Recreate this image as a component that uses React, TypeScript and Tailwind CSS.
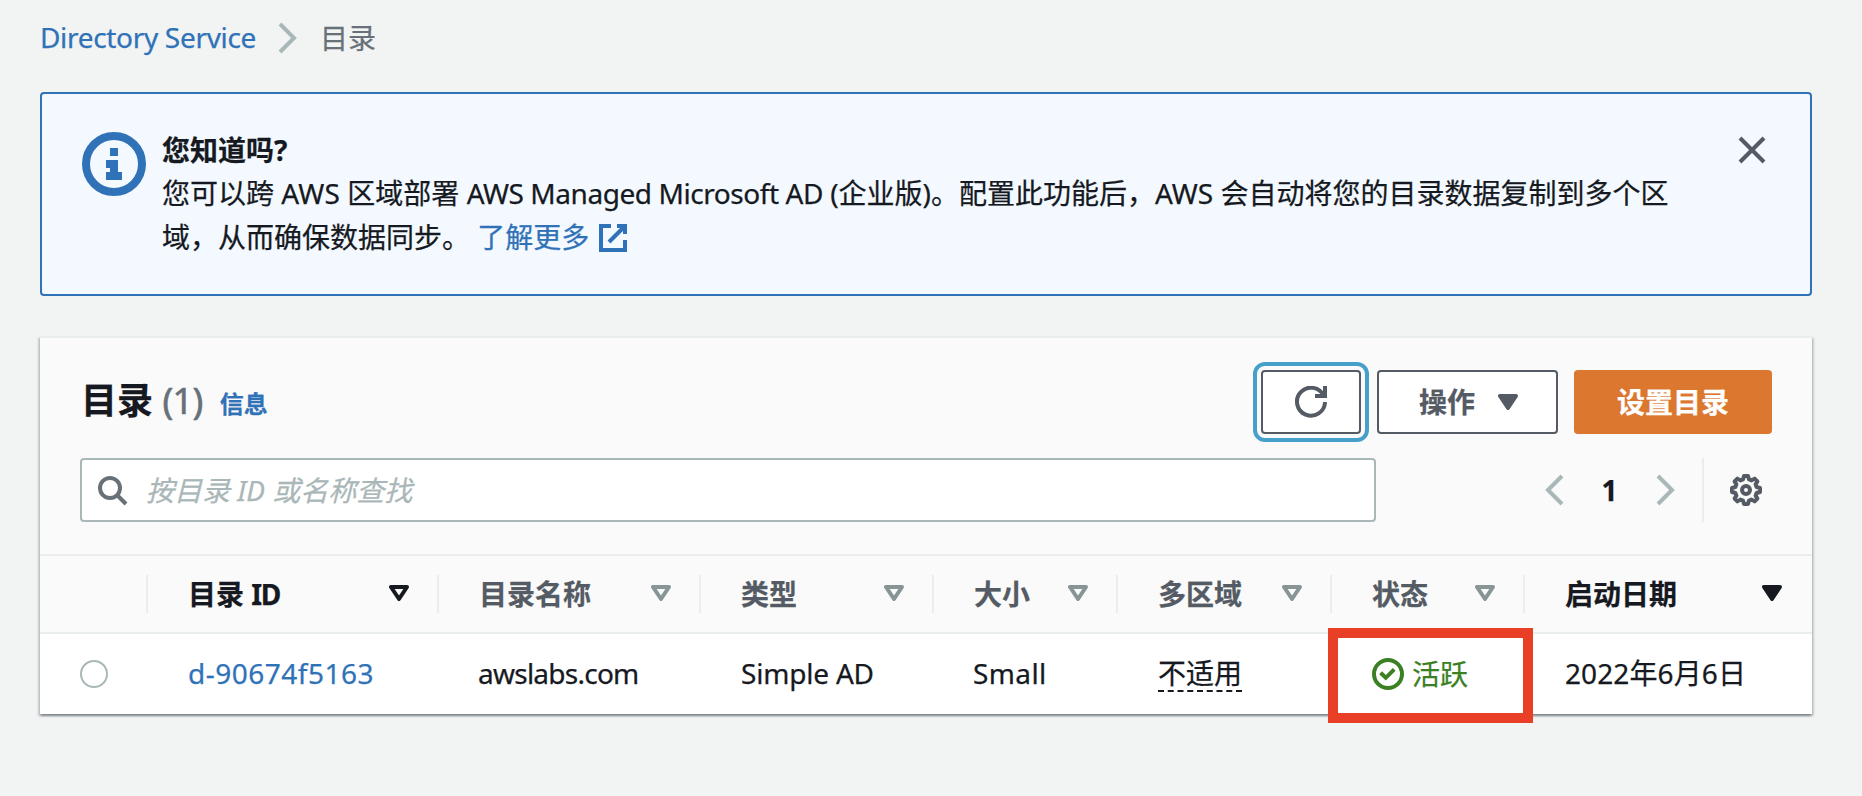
import type { ReactNode } from "react";

function Icon({ children, className = "" }: { children: ReactNode; className?: string }) {
  return (
    <svg viewBox="0 0 16 16" className={`block size-8 shrink-0 ${className}`} fill="none" stroke="currentColor" strokeWidth="2">
      {children}
    </svg>
  );
}

function ChevronRight({ className = "" }: { className?: string }) {
  return (
    <Icon className={className}>
      <path d="M4 1l7 7-7 7" />
    </Icon>
  );
}

function Caret({ filled = false, className = "" }: { filled?: boolean; className?: string }) {
  return (
    <svg viewBox="0 0 20 16" className={`block h-4 w-5 shrink-0 ${className}`} stroke="currentColor" strokeWidth="4" strokeLinejoin="round" fill={filled ? "currentColor" : "none"}>
      <path d="M2 2h16l-8 12z" />
    </svg>
  );
}

type Column = { label: ReactNode; state: "active" | "idle" | "sorted"; last?: boolean };

const columns: Column[] = [
  { label: <>目录 <span className="tracking-[-1.5px]">ID</span></>, state: "active" },
  { label: "目录名称", state: "idle" },
  { label: "类型", state: "idle" },
  { label: "大小", state: "idle" },
  { label: "多区域", state: "idle" },
  { label: "状态", state: "idle" },
  { label: "启动日期", state: "sorted", last: true },
];

const gridCols = "grid grid-cols-[108px_291px_262px_233px_184px_214px_193px_287px]";

export default function App() {
  return (
    <main
      lang="zh-CN"
      className="min-h-[796px] bg-[#f2f3f3] pt-4 pr-[50px] pl-10 font-['Noto_Sans','Noto_Sans_CJK_SC',sans-serif] text-[28px] leading-[44px] text-[#16191f] [-webkit-text-stroke:0.25px]"
    >
      <nav className="flex h-11 items-center">
        <a className="w-[232px] pb-0.5 tracking-[-0.32px] text-[#3072b8]">Directory Service</a>
        <ChevronRight className="text-[#aab7b8]" />
        <span className="ml-4 pb-px text-[#687078]">目录</span>
      </nav>

      <section className="mt-8 flex h-[204px] rounded-[4px] border-2 border-[#3072b8] bg-[#f3f9fe] pt-[34px] pl-10">
        <svg viewBox="0 0 16 16" className="mt-1 block size-16 shrink-0 text-[#3072b8]" fill="none" stroke="currentColor" strokeWidth="2">
          <circle cx="8" cy="8" r="7" />
          <path d="M7 5h2M6 8h3M8 8v3M6 11h4" />
        </svg>
        <div className="ml-4 w-[1574px] shrink-0">
          <div className="font-bold">您知道吗?</div>
          <p className="-mt-px whitespace-nowrap">
            您可以跨 <span className="tracking-[0.2px]">AWS</span> 区域部署 <span className="tracking-[-0.44px]">AWS Managed Microsoft AD</span> (企业版)。配置此功能后，AWS 会自动将您的目录数据复制到多个区
            <br />
            域，从而确保数据同步。{" "}
            <a className="text-[#3072b8]">
              了解更多{" "}
              <svg viewBox="0 0 16 16" className="-mt-1.5 inline-block size-8 align-middle" fill="none" stroke="currentColor" strokeWidth="2">
                <path d="M10 2h4v4M6 10l8-8M14 9v5H2V2h5" />
              </svg>
            </a>
          </p>
        </div>
        <Icon className="mt-1.5 text-[#545b64]">
          <path d="M2 2l12 12M14 2L2 14" />
        </Icon>
      </section>

      <section className="mt-10 border-t-2 border-[#eaeded] bg-white shadow-[0_2px_2px_0_rgba(0,28,36,0.3),2px_2px_2px_0_rgba(0,28,36,0.15),-2px_2px_2px_0_rgba(0,28,36,0.15)]">
        <div className="h-[216px] bg-[#fafafa] px-10 pt-8">
          <div className="flex h-16 items-center">
            <h2 className="ml-px pb-0.5 text-[36px] font-bold">
              目录 <span className="font-normal tracking-[-0.6px] text-[#687078] [-webkit-text-stroke:0.6px]">(1)</span>
            </h2>
            <a className="ml-[17px] pt-1 text-[24px] font-bold text-[#3072b8]">信息</a>
            <div className="ml-auto flex gap-4">
              <button className="flex h-16 w-[100px] items-center justify-center rounded-[4px] border-2 border-[#545b64] bg-white text-[#545b64] outline-4 outline-offset-4 outline-[#47a0c9]">
                <Icon>
                  <path d="M10 5h5V0" />
                  <path d="M15 8a7 7 0 1 1-.7-3.2" />
                </Icon>
              </button>
              <button className="flex h-16 w-[181px] items-center rounded-[4px] border-2 border-[#545b64] bg-white pl-10 font-bold text-[#545b64]">
                <span className="w-[79px] text-left">操作</span>
                <Caret filled />
              </button>
              <button className="h-16 w-[198px] rounded-[4px] bg-[#dc7730] font-bold text-white">设置目录</button>
            </div>
          </div>

          <div className="mt-6 flex h-16 items-center">
            <div className="flex h-16 w-[1296px] items-center rounded-[4px] border-2 border-[#aab7b8] bg-white pl-3.5">
              <Icon className="text-[#687078]">
                <circle cx="7" cy="7" r="5" />
                <path d="M15 15l-4.5-4.5" />
              </Icon>
              <span className="ml-4.5 text-[#aab7b8] italic">按目录 ID 或名称查找</span>
            </div>
            <Icon className="ml-[162px] text-[#aab7b8]">
              <path d="M12 1L5 8l7 7" />
            </Icon>
            <span className="mr-px w-[79px] pb-px text-center font-bold">1</span>
            <ChevronRight className="text-[#aab7b8]" />
            <span className="ml-5 h-16 w-0.5 bg-[#eaeded]" />
            <Icon className="ml-[26px] text-[#545b64]">
              <path
                strokeLinejoin="round"
                d="M7 1h2l.5 1.7 1.3.5 1.5-.9 1.4 1.4-.9 1.5.5 1.3L15 7v2l-1.7.5-.5 1.3.9 1.5-1.4 1.4-1.5-.9-1.3.5L9 15H7l-.5-1.7-1.3-.5-1.5.9-1.4-1.4.9-1.5-.5-1.3L1 9V7l1.7-.5.5-1.3-.9-1.5 1.4-1.4 1.5.9 1.3-.5z"
              />
              <circle cx="8" cy="8" r="2" />
            </Icon>
          </div>
        </div>

        <div className={`${gridCols} h-20 items-center border-y-2 border-[#eaeded] bg-[#fafafa] font-bold`}>
          <div className="h-[38px] border-r-2 border-[#eaeded]" />
          {columns.map((c, i) => (
            <div
              key={i}
              className={`flex h-[38px] items-center justify-between pl-10 ${c.last ? "pr-[30px]" : "border-r-2 border-[#eaeded] pr-7"} ${c.state === "idle" ? "text-[#545b64]" : ""}`}
            >
              <span>{c.label}</span>
              <Caret filled={c.state === "sorted"} className={`-mt-0.5 ${c.state === "idle" ? "text-[#879596]" : ""}`} />
            </div>
          ))}
        </div>

        <div className={`${gridCols} h-20 items-center`}>
          <div className="pl-10">
            <span className="block size-7 rounded-full border-2 border-[#aab7b8] bg-white" />
          </div>
          <div className="pb-0.5 pl-10 tracking-[0.5px] text-[#3072b8]">d-90674f5163</div>
          <div className="pb-0.5 pl-[39px] tracking-[-0.75px]">awslabs.com</div>
          <div className="pb-0.5 pl-10 tracking-[-0.2px]">Simple AD</div>
          <div className="pb-0.5 pl-[39px] tracking-[0.4px]">Small</div>
          <div className="pl-10">
            <span className="mt-0.5 block h-[34px] w-[84px] border-b-2 border-dashed border-[#16191f] leading-[30px]">不适用</span>
          </div>
          <div className="relative flex items-center pl-10 text-[#3b8023]">
            <Icon>
              <circle cx="8" cy="8" r="7" />
              <path d="M4.3 7.4l2.6 2.5 4.2-4.2" />
            </Icon>
            <span className="ml-2 pb-px">活跃</span>
            <span className="absolute top-[-24px] left-[-4px] h-[95px] w-[205px] border-[10px] border-[#e93f26]" />
          </div>
          <div className="pb-0.5 pl-10 tracking-[0.1px]">2022年6月6日</div>
        </div>
      </section>
    </main>
  );
}
